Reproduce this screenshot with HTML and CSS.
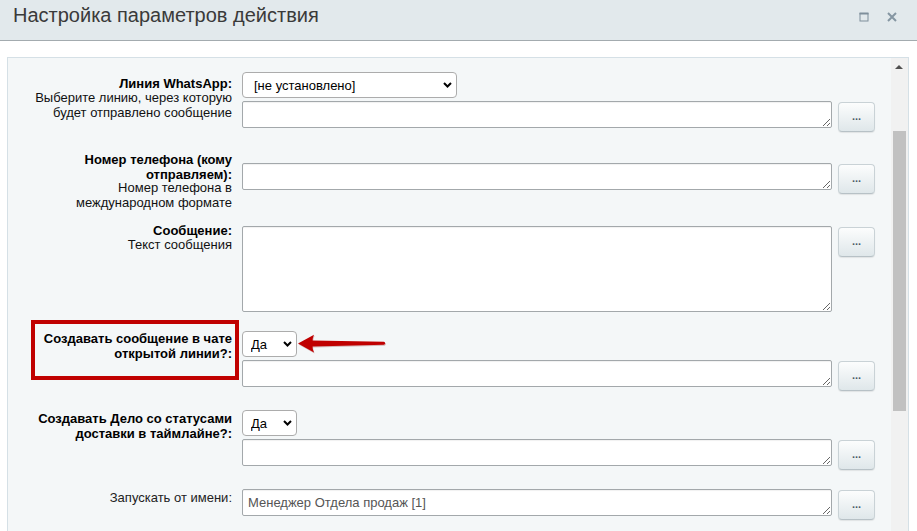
FILE: index.html
```html
<!DOCTYPE html>
<html lang="ru">
<head>
<meta charset="utf-8">
<title>Настройка параметров действия</title>
<link rel="stylesheet" href="styles.css">
</head>
<body>
<div class="dialog">
  <div class="head">
    <div class="title">Настройка параметров действия</div>
    <div class="head-icons">
      <svg class="ico" width="10" height="10" viewBox="0 0 10 10"><rect x="1" y="1.5" width="8" height="7.5" fill="none" stroke="#7f8f9b" stroke-width="1"/><rect x="0.5" y="0.5" width="9" height="2" fill="#7f8f9b"/></svg>
      <svg class="ico" width="10" height="10" viewBox="0 0 10 10"><path d="M1 1 L9 9 M9 1 L1 9" stroke="#8596a2" stroke-width="2" fill="none"/></svg>
    </div>
  </div>
  <div class="body">
    <div class="panel">
      <div class="content">

        <div class="row r1">
          <div class="label">
            <div class="name">Линия WhatsApp:</div>
            <div class="desc">Выберите линию, через которую будет отправлено сообщение</div>
          </div>
          <div class="control">
            <div class="select-wrap wide">
              <select class="sel sel-wide"><option>[не установлено]</option></select>
              <svg class="chev" width="9" height="6" viewBox="0 0 9 6"><path d="M1 1 L4.5 4.5 L8 1" stroke="#000" stroke-width="2" fill="none"/></svg>
            </div>
            <div class="field"><textarea class="ta"></textarea><button class="dots">...</button></div>
          </div>
        </div>

        <div class="row r2">
          <div class="label">
            <div class="name name-multi">Номер телефона (кому отправляем):</div>
            <div class="desc">Номер телефона в международном формате</div>
          </div>
          <div class="control">
            <div class="field"><textarea class="ta"></textarea><button class="dots">...</button></div>
          </div>
        </div>

        <div class="row r3">
          <div class="label">
            <div class="name">Сообщение:</div>
            <div class="desc">Текст сообщения</div>
          </div>
          <div class="control">
            <div class="field"><textarea class="ta ta-big"></textarea><button class="dots">...</button></div>
          </div>
        </div>

        <div class="row r4">
          <div class="mark"></div>
          <div class="label">
            <div class="name name-only">Создавать сообщение в чате открытой линии?:</div>
          </div>
          <div class="control">
            <div class="select-wrap">
              <select class="sel sel-short"><option>Да</option></select>
              <svg class="chev" width="9" height="6" viewBox="0 0 9 6"><path d="M1 1 L4.5 4.5 L8 1" stroke="#000" stroke-width="2" fill="none"/></svg>
            </div>
            <div class="field"><textarea class="ta"></textarea><button class="dots">...</button></div>
          </div>
          <svg class="arrow" width="94" height="24" viewBox="0 0 94 24">
            <path d="M2 10.6 L18 1.8 Q16.2 6 16.6 7.6 L88 8.7 Q90.6 10.3 88 11.8 L16.6 13.6 Q16.2 15.4 18 19.6 Z" fill="#7a0000" opacity="0.25" transform="translate(0.6 1)"/>
            <path d="M2 10.6 L18 1.8 Q16.2 6 16.6 7.6 L88 8.7 Q90.6 10.3 88 11.8 L16.6 13.6 Q16.2 15.4 18 19.6 Z" fill="#c00000"/>
          </svg>
        </div>

        <div class="row r5">
          <div class="label">
            <div class="name name-only">Создавать Дело со статусами доставки в таймлайне?:</div>
          </div>
          <div class="control">
            <div class="select-wrap">
              <select class="sel sel-short"><option>Да</option></select>
              <svg class="chev" width="9" height="6" viewBox="0 0 9 6"><path d="M1 1 L4.5 4.5 L8 1" stroke="#000" stroke-width="2" fill="none"/></svg>
            </div>
            <div class="field"><textarea class="ta"></textarea><button class="dots">...</button></div>
          </div>
        </div>

        <div class="row r6">
          <div class="label">
            <div class="plain">Запускать от имени:</div>
          </div>
          <div class="control">
            <div class="field"><textarea class="ta ta-val">Менеджер Отдела продаж [1]</textarea><button class="dots">...</button></div>
          </div>
        </div>

      </div>
      <div class="scrollbar">
        <div class="sb-up"></div>
        <div class="sb-thumb"></div>
      </div>
    </div>
  </div>
</div>
</body>
</html>
```

FILE: styles.css
```css
html, body {
  margin: 0;
  padding: 0;
  height: 100%;
  overflow: hidden;
  background: #ffffff;
  font-family: "Liberation Sans", Arial, sans-serif;
}

.dialog {
  width: 917px;
  height: 531px;
  display: flex;
  flex-direction: column;
}

.head {
  height: 40px;
  flex: none;
  background: #e2e9ec;
  border-bottom: 1px solid #a3abaf;
  display: flex;
  align-items: flex-start;
  justify-content: space-between;
}

.title {
  padding-left: 13px;
  font-size: 20px;
  line-height: 30px;
  color: #3a3a3a;
}

.head-icons {
  display: flex;
  gap: 18px;
  padding: 12px 20px 0 0;
}

.ico {
  display: block;
}

.body {
  flex: 1;
  padding: 16px 8px 0 7px;
  overflow: hidden;
}

.panel {
  height: 480px;
  display: flex;
  border: 1px solid #d5e0e6;
  border-bottom: none;
  background: #f4f7f8;
}

.content {
  flex: 1;
  padding-top: 14px;
}

.row {
  position: relative;
  display: flex;
  align-items: flex-start;
  gap: 10px;
}

.label {
  width: 215px;
  padding-left: 9px;
  text-align: right;
  font-size: 13px;
  line-height: 15px;
  color: #000;
}

.name {
  font-weight: bold;
  color: #000;
  line-height: 15px;
  padding-bottom: 0;
}

.name + .desc {
  margin-top: 0;
}

/* the label heading sits tight against its description */
.r1 .name,
.r3 .name {
  line-height: 13px;
  padding-top: 1px;
}

.name-multi {
  height: 28px;
}

.name-only {
  line-height: 15px;
}

.desc {
  color: #111;
}

.plain {
  color: #222;
}

.control {
  display: flex;
  flex-direction: column;
  align-items: flex-start;
}

.field {
  display: flex;
  align-items: flex-start;
  gap: 6px;
}

.ta {
  box-sizing: border-box;
  width: 590px;
  height: 27px;
  margin: 0;
  padding: 5px 5px;
  border: 1px solid #a3a8ab;
  border-radius: 2px;
  background: #fff;
  box-shadow: inset 0 1px 1px rgba(0, 0, 0, 0.06);
  font-family: "Liberation Sans", Arial, sans-serif;
  font-size: 13px;
  line-height: 15px;
  color: #555;
  resize: both;
  overflow: hidden;
  display: block;
}

.ta-big {
  height: 86px;
}

.dots {
  box-sizing: border-box;
  margin: 1px 0 0 0;
  width: 37px;
  height: 30px;
  padding: 0 0 2px 0;
  border: 1px solid #c9d2d6;
  border-bottom-color: #b7c1c6;
  border-radius: 4px;
  background: linear-gradient(#fcfdfd, #dfe7ea);
  box-shadow: 0 1px 1px rgba(0, 0, 0, 0.08);
  font-family: "Liberation Sans", Arial, sans-serif;
  font-size: 11px;
  font-weight: bold;
  color: #4b5b67;
  line-height: 12px;
}

.select-wrap {
  position: relative;
  margin-bottom: 3px;
}

.sel {
  box-sizing: border-box;
  display: block;
  height: 26px;
  margin: 0;
  padding: 0 0 0 8px;
  border: 1px solid #acacac;
  border-radius: 4px;
  background: #fff;
  font-family: "Liberation Sans", Arial, sans-serif;
  font-size: 13px;
  color: #000;
  appearance: none;
  -webkit-appearance: none;
}

.sel-wide {
  width: 215px;
  padding-left: 11px;
}

.sel-short {
  width: 55px;
}

.chev {
  position: absolute;
  right: 5px;
  top: 10px;
  pointer-events: none;
}

/* row spacing */
.r1 .label { padding-top: 4px; }
.r2 { margin-top: 20px; }
.r2 .control { padding-top: 11px; }
.r3 { margin-top: 13px; }
.r3 .control { padding-top: 3px; }
.r4 { margin-top: 19px; }
.r5 { margin-top: 19px; }
.r5 .label { padding-top: 1px; }
.r6 { margin-top: 19px; }
.r6 .label { padding-top: 1px; }

/* annotation overlay */
.mark {
  position: absolute;
  left: 23px;
  top: -11px;
  width: 208px;
  height: 60px;
  box-sizing: border-box;
  border: 4px solid #c00000;
}

.arrow {
  position: absolute;
  left: 288px;
  top: 2px;
}

.scrollbar {
  width: 17px;
  flex: none;
  background: #f1f1f1;
  position: relative;
}

.sb-up {
  width: 0;
  height: 0;
  margin: 7px 0 0 4px;
  border-left: 4px solid transparent;
  border-right: 4px solid transparent;
  border-bottom: 4px solid #505050;
}

.sb-thumb {
  margin: 62px 0 0 2px;
  width: 13px;
  height: 280px;
  background: #c1c1c1;
}
```
